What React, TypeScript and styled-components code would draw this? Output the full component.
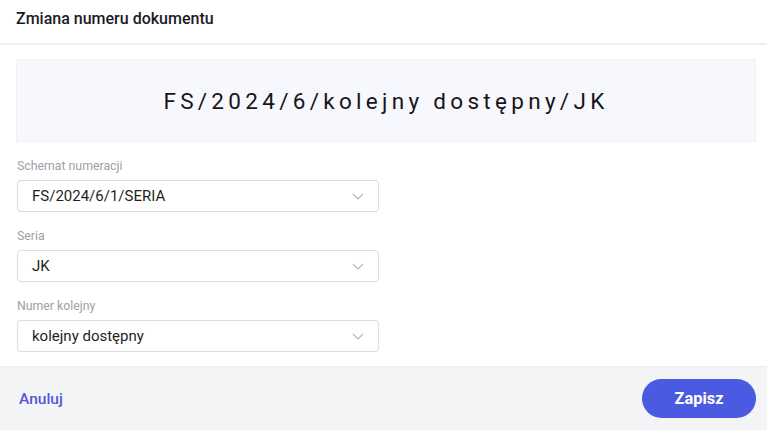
import styled, { createGlobalStyle } from "styled-components";

const GlobalStyle = createGlobalStyle`
    html, body {
        margin: 0;
        padding: 0;
        background: #ffffff;
        font-family: Roboto, "Liberation Sans", sans-serif;
    }
`;

const Modal = styled.div`
    width: 767px;
    height: 430px;
    display: flex;
    flex-direction: column;
    background: #ffffff;
    overflow: hidden;
`;

const Header = styled.div`
    height: 45px;
    box-sizing: border-box;
    padding: 0 16px 6px;
    display: flex;
    align-items: center;
    border-bottom: 2px solid #efeff1;
`;

const Title = styled.h2`
    margin: 0;
    font-size: 16px;
    font-weight: 500;
    color: #1b1b1f;
`;

const Body = styled.div`
    padding: 14px 11px 14px 16px;
    display: flex;
    flex-direction: column;
`;

const Preview = styled.div`
    height: 83px;
    display: flex;
    align-items: center;
    justify-content: center;
    background: #f7f8fd;
    border: 1px solid #f0f1f6;
    box-sizing: border-box;
    font-size: 22.5px;
    letter-spacing: 4.3px;
    color: #15151a;
    margin-bottom: 16px;
`;

const Fields = styled.div`
    display: flex;
    flex-direction: column;
    gap: 16px;
    padding-left: 1px;
`;

const Field = styled.div`
    display: flex;
    flex-direction: column;
    gap: 6px;
`;

const Label = styled.label`
    font-size: 12.3px;
    line-height: 16px;
    color: #a0a0a6;
`;

const Select = styled.div`
    width: 362px;
    height: 32px;
    box-sizing: border-box;
    border: 1px solid #dcdce0;
    border-radius: 4px;
    display: flex;
    align-items: center;
    justify-content: space-between;
    padding: 0 14px;
    font-size: 15px;
    color: #1f1f24;
`;

const Footer = styled.div`
    flex: 1;
    display: flex;
    align-items: center;
    justify-content: space-between;
    background: #f3f4f6;
    border-top: 1px solid #ececef;
    padding: 0 11px 0 19px;
`;

const CancelLink = styled.button`
    border: none;
    background: none;
    padding: 0;
    font-family: inherit;
    font-size: 15.5px;
    font-weight: 500;
    color: #5457dc;
    cursor: pointer;
`;

const SaveButton = styled.button`
    width: 114px;
    height: 39px;
    border: none;
    border-radius: 20px;
    background: #4b5be1;
    color: #ffffff;
    font-family: inherit;
    font-size: 16.4px;
    font-weight: 700;
    cursor: pointer;
`;

const Chevron = () => (
    <svg width="12" height="7" viewBox="0 0 12 7" fill="none">
        <path d="M1 1l5 5 5-5" stroke="#b5b5ba" strokeWidth="1.2" />
    </svg>
);

const fields = [
    { label: "Schemat numeracji", value: "FS/2024/6/1/SERIA" },
    { label: "Seria", value: "JK" },
    { label: "Numer kolejny", value: "kolejny dostępny" },
];

const App = () => {
    return (
        <Modal>
            <GlobalStyle />
            <Header>
                <Title>Zmiana numeru dokumentu</Title>
            </Header>
            <Body>
                <Preview>FS/2024/6/kolejny dostępny/JK</Preview>
                <Fields>
                    {fields.map((f) => (
                        <Field key={f.label}>
                            <Label>{f.label}</Label>
                            <Select>
                                <span>{f.value}</span>
                                <Chevron />
                            </Select>
                        </Field>
                    ))}
                </Fields>
            </Body>
            <Footer>
                <CancelLink>Anuluj</CancelLink>
                <SaveButton>Zapisz</SaveButton>
            </Footer>
        </Modal>
    );
};

export default App;
